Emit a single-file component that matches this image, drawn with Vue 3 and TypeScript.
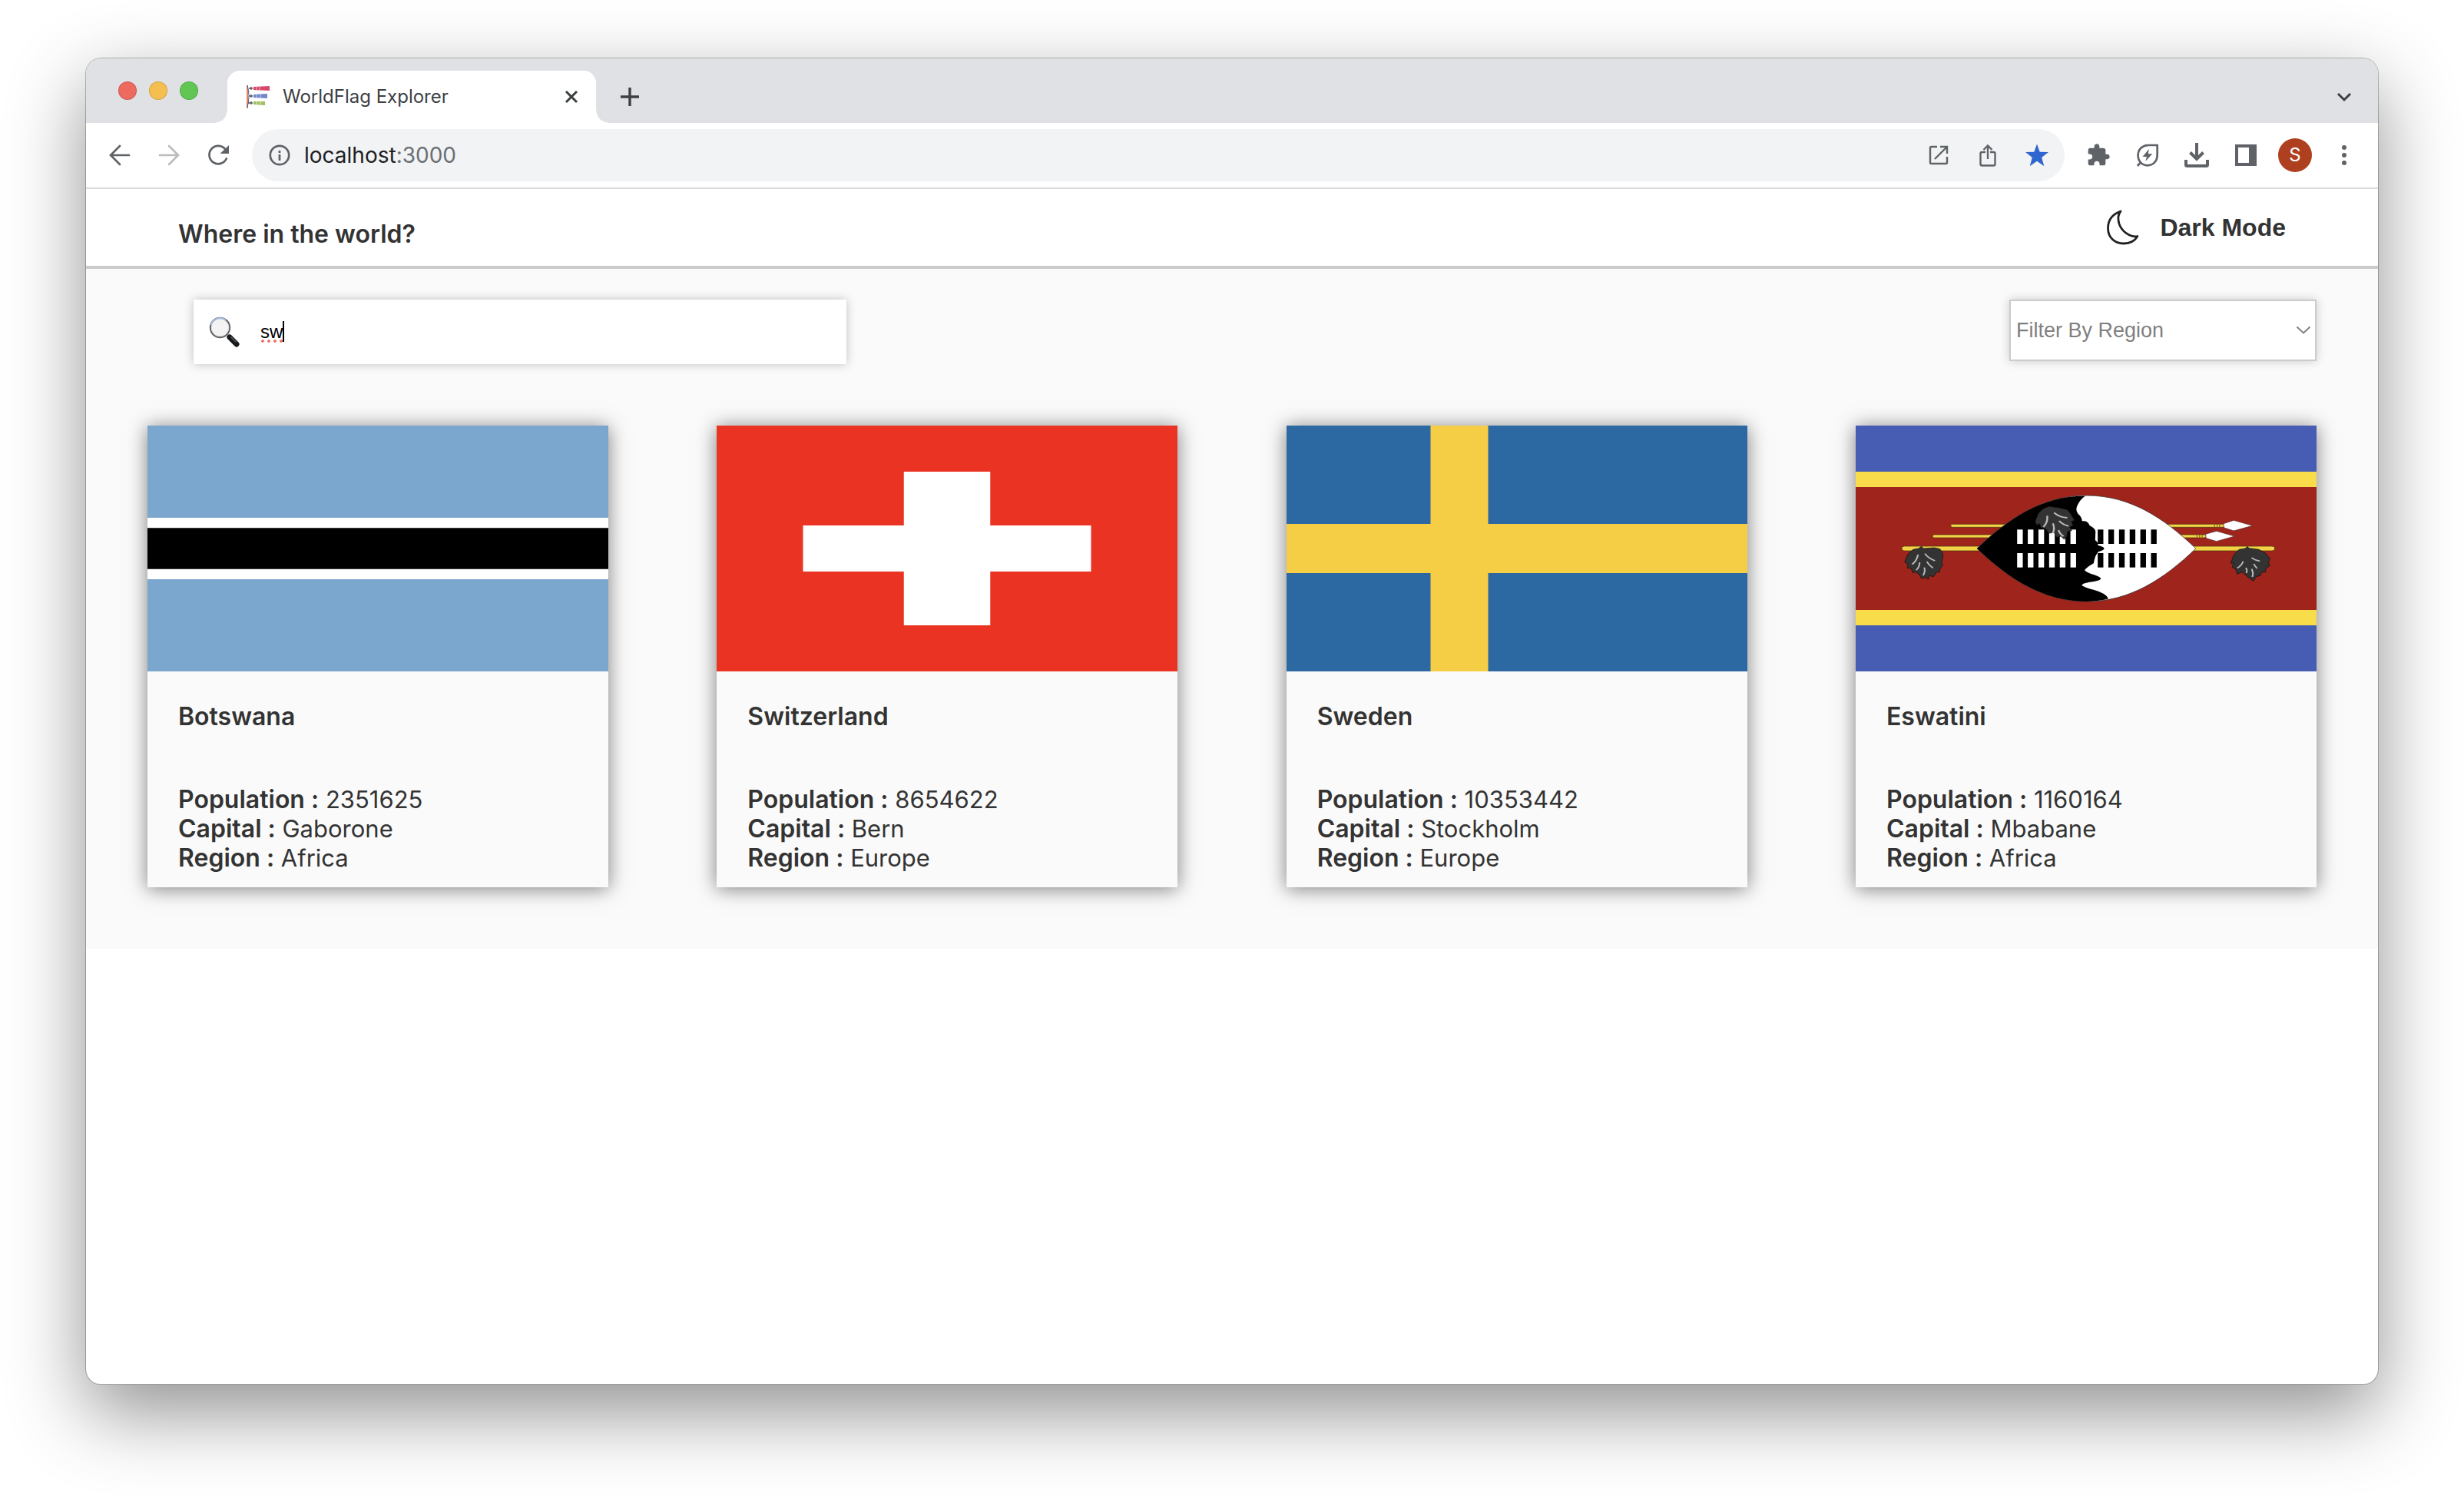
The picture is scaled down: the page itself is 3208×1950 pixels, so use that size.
<script setup lang="ts">
import { ref } from 'vue'

interface Country {
  name: string
  population: number
  capital: string
  region: string
}

const countries: Country[] = [
  { name: 'Botswana', population: 2351625, capital: 'Gaborone', region: 'Africa' },
  { name: 'Switzerland', population: 8654622, capital: 'Bern', region: 'Europe' },
  { name: 'Sweden', population: 10353442, capital: 'Stockholm', region: 'Europe' },
  { name: 'Eswatini', population: 1160164, capital: 'Mbabane', region: 'Africa' },
]

const regions = ['Africa', 'Americas', 'Asia', 'Europe', 'Oceania']
const query = ref('sw')
const region = ref('')

const slots = [0, 1, 2, 3, 4, 5]
</script>

<template>
  <div class="desktop">
    <div class="window">
      <div class="tabstrip">
        <div class="lights">
          <button class="light red" aria-label="Close window"></button>
          <button class="light amber" aria-label="Minimise window"></button>
          <button class="light green" aria-label="Zoom window"></button>
        </div>
        <div class="tab">
          <svg class="i32" viewBox="0 0 32 32">
            <path d="M2 1V31" stroke="#e8836b" stroke-width="2" />
            <path d="M2 1Q6 14 2 30" fill="none" stroke="#555a6b" stroke-width="1" />
            <path d="M4 5H9M4 15H9M3 24H9M7 3V7M7 13V17M7 22V26" stroke="#4b5164" stroke-width="1.3" />
            <path d="M10 3L31 2V8L10 7Z" fill="#d6476a" />
            <path d="M10 13L28 12V18L10 17Z" fill="#7187c9" />
            <path d="M10 22L25 22V27L10 26Z" fill="#9fbf62" />
            <path d="M14 3V7M18 3V7" stroke="#f08aa4" stroke-width="1.5" />
            <path d="M14 13V17M19 13V17" stroke="#a9b8e6" stroke-width="1.5" />
            <path d="M14 22V26M19 22V26" stroke="#cfe09c" stroke-width="1.5" />
          </svg>
          <span class="tab-title">WorldFlag Explorer</span>
          <button class="ib small" aria-label="Close tab">
            <svg class="i32" viewBox="0 0 32 32"><path d="M9 9L23 23M23 9L9 23" stroke="#3c4043" stroke-width="3" /></svg>
          </button>
        </div>
        <button class="ib new-tab" aria-label="New tab">
          <svg class="i32" viewBox="0 0 32 32"><path d="M16 4V28M4 16H28" stroke="#3c4043" stroke-width="3.4" /></svg>
        </button>
        <button class="ib tab-search" aria-label="Search tabs">
          <svg class="i32" viewBox="0 0 32 32"><path d="M8 12L16 20L24 12" fill="none" stroke="#3c4043" stroke-width="3" /></svg>
        </button>
      </div>

      <div class="toolbar">
        <button class="ib" aria-label="Back">
          <svg class="i32" viewBox="0 0 32 32"><path d="M28 16H4.5M16 4L4 16L16 28" fill="none" stroke="#5f6368" stroke-width="2.7" stroke-linecap="round" /></svg>
        </button>
        <button class="ib" aria-label="Forward">
          <svg class="i32" viewBox="0 0 32 32"><path d="M4 16H28M16 4L28 16L16 28" fill="none" stroke="#babcbe" stroke-width="2.7" stroke-linecap="round" /></svg>
        </button>
        <button class="ib" aria-label="Reload">
          <svg class="i32" viewBox="0 0 32 32">
            <path d="M25.5 8.5A11.7 11.7 0 1 0 26.8 20.5" fill="none" stroke="#5f6368" stroke-width="2.7" stroke-linecap="round" />
            <path d="M30 3V14H18.5Z" fill="#5f6368" />
          </svg>
        </button>
        <div class="omnibox">
          <svg class="i32" viewBox="0 0 32 32">
            <circle cx="16" cy="16" r="12.2" fill="none" stroke="#5f6368" stroke-width="2.7" />
            <path d="M16 10V13M16 15V23" stroke="#5f6368" stroke-width="2.8" />
          </svg>
          <span class="url">localhost<span class="port">:3000</span></span>
          <button class="ib" aria-label="Open in app">
            <svg class="i32" viewBox="0 0 32 32">
              <path d="M14 5H6.5A1.5 1.5 0 0 0 5 6.5V25.5A1.5 1.5 0 0 0 6.5 27H25.5A1.5 1.5 0 0 0 27 25.5V18M18 5H27V14M27 5L11 21" fill="none" stroke="#5f6368" stroke-width="2.4" />
            </svg>
          </button>
          <button class="ib" aria-label="Share">
            <svg class="i32" viewBox="0 0 32 32">
              <path d="M13 12H8.5A2 2 0 0 0 6.5 14V27.5A2 2 0 0 0 8.5 29.5H23.5A2 2 0 0 0 25.5 27.5V14A2 2 0 0 0 23.5 12H19M16 21V4M10.5 9L16 3.5L21.5 9" fill="none" stroke="#5f6368" stroke-width="2.4" />
            </svg>
          </button>
          <button class="ib" aria-label="Bookmarked">
            <svg class="i32" viewBox="0 0 32 32"><path d="M16 1.5L19.7 11.7L31 12L22.2 19L25.3 30.2L16 23.8L6.7 30.2L9.8 19L1 12L12.3 11.7Z" fill="#3166cf" /></svg>
          </button>
        </div>
        <button class="ib" aria-label="Extensions">
          <svg class="i32" viewBox="0 0 24 24">
            <path d="M20.5 11H19V7c0-1.1-.9-2-2-2h-4V3.5C13 2.12 11.88 1 10.5 1S8 2.12 8 3.5V5H4c-1.1 0-1.99.9-1.99 2v3.8H3.5c1.49 0 2.7 1.21 2.7 2.7s-1.21 2.7-2.7 2.7H2V20c0 1.1.9 2 2 2h3.8v-1.5c0-1.49 1.21-2.7 2.7-2.7s2.7 1.21 2.7 2.7V22H17c1.1 0 2-.9 2-2v-4h1.5c1.38 0 2.5-1.12 2.5-2.5S21.88 11 20.5 11z" fill="#5f6368" />
          </svg>
        </button>
        <button class="ib" aria-label="Energy saver">
          <svg class="i32" viewBox="0 0 32 32">
            <path d="M28.7 3H17C9 3 3.6 8.5 3.6 16.2C3.6 24 9 29.3 15.8 29.3C23 29.3 28.7 24 28.7 15.5ZM7 25.5L2.8 30" fill="none" stroke="#5f6368" stroke-width="2.7" />
            <path d="M17.8 8L9.5 18H15L13.2 24L22.3 14.3H16.8Z" fill="#5f6368" />
          </svg>
        </button>
        <button class="ib" aria-label="Downloads">
          <svg class="i32" viewBox="0 0 32 32">
            <path d="M16 0V21M7.5 12.5L16 21L24.5 12.5M2 22V28.5A1.5 1.5 0 0 0 3.5 30H28.5A1.5 1.5 0 0 0 30 28.5V22" fill="none" stroke="#5f6368" stroke-width="4" />
          </svg>
        </button>
        <button class="ib" aria-label="Side panel">
          <svg class="i32" viewBox="0 0 32 32"><path d="M2 2H30V30H2ZM6 6V26H20V6Z" fill="#5f6368" fill-rule="evenodd" /></svg>
        </button>
        <button class="ib avatar" aria-label="Profile"><span class="disc">S</span></button>
        <button class="ib" aria-label="Menu">
          <svg class="i32" viewBox="0 0 32 32" fill="#5f6368"><circle cx="16" cy="6" r="3" /><circle cx="16" cy="16" r="3" /><circle cx="16" cy="26" r="3" /></svg>
        </button>
      </div>

      <header class="header">
        <h1 class="brand">Where in the world?</h1>
        <button class="mode">
          <svg class="moon" viewBox="0 0 42 46">
            <path d="M19 2C8 6 2.5 14 2.5 24C2.5 36 11 44 23 44C31 44 37.5 40.5 41 34.5Q37 35.5 33 34C22 30.5 15 20 16 9Q16.5 5 19 2Z" fill="none" stroke="#222" stroke-width="2.8" stroke-linejoin="round" />
          </svg>
          <span>Dark Mode</span>
        </button>
      </header>

      <main class="main">
        <div class="filters">
          <div class="search">
            <svg class="glass" viewBox="0 0 40 40" aria-hidden="true">
              <path d="M24.5 24.5L27 27" stroke="#8c9094" stroke-width="4" />
              <path d="M27 27L36 36" stroke="#16191c" stroke-width="7" stroke-linecap="round" />
              <path d="M28.5 26.5L35.5 33.5" stroke="#525a60" stroke-width="1.5" />
              <circle cx="14.5" cy="14.5" r="12.6" fill="#f3f3f3" stroke="#62676b" stroke-width="2.2" />
              <path d="M2.5 11A12.6 12.6 0 0 1 22 4.5" fill="none" stroke="#9dbbe0" stroke-width="1.8" />
              <circle cx="14.5" cy="14.5" r="11.3" fill="none" stroke="#d5d8da" stroke-width="0.8" />
            </svg>
            <input v-model="query" class="query" type="text" aria-label="Search for a country" spellcheck="false" />
            <span class="caret"></span>
            <span class="squiggle"></span>
          </div>
          <div class="picker">
            <select v-model="region" class="region" aria-label="Filter by region">
              <option value="">Filter By Region</option>
              <option v-for="r in regions" :key="r" :value="r">{{ r }}</option>
            </select>
            <svg class="arrow" viewBox="0 0 20 12"><path d="M1.5 1.5L10 9.5L18.5 1.5" fill="none" stroke="#808080" stroke-width="2" /></svg>
          </div>
        </div>

        <div class="cards">
          <article v-for="c in countries" :key="c.name" class="card">
            <svg v-if="c.name === 'Botswana'" class="flag" viewBox="0 0 24 24" preserveAspectRatio="none">
              <path d="M0 0H24V24H0Z" fill="#7ba6ce" />
              <path d="M0 9H24V15H0Z" fill="#fff" />
              <path d="M0 10H24V14H0Z" fill="#000" />
            </svg>
            <svg v-else-if="c.name === 'Switzerland'" class="flag" viewBox="0 0 32 32" preserveAspectRatio="none">
              <path d="M0 0H32V32H0Z" fill="#ea3323" />
              <path d="M13 6H19V13H26V19H19V26H13V19H6V13H13Z" fill="#fff" />
            </svg>
            <svg v-else-if="c.name === 'Sweden'" class="flag" viewBox="0 0 16 10" preserveAspectRatio="none">
              <path d="M0 0H16V10H0Z" fill="#2c68a2" />
              <path d="M5 0H7V4H16V6H7V10H5V6H0V4H5Z" fill="#f6ce46" />
            </svg>
            <svg v-else class="flag" viewBox="39 42 1470 960" preserveAspectRatio="none">
              <path d="M39 42H1509V1002H39Z" fill="#465db3" />
              <path d="M39 222H1509V822H39Z" fill="#f8dc4a" />
              <path d="M39 282H1509V762H39Z" fill="#9f241b" />
              <g fill="#f3d346" stroke="#4a3510" stroke-width="2">
                <rect x="342" y="427" width="874" height="12" rx="6" />
                <rect x="284" y="468" width="874" height="12" rx="6" />
                <rect x="186" y="513" width="1190" height="18" rx="9" />
              </g>
              <path d="M1184 428V439M1192 428V439M1200 428V439M1128 468V479M1136 468V479M1144 468V479" stroke="#8a6d1c" stroke-width="3" />
              <path d="M1212 425L1245 412L1305 433L1245 453L1214 441ZM1155 466L1190 454L1248 474L1190 494L1157 482Z" fill="#fff" stroke="#5a2a25" stroke-width="2" />
              <path d="M426 522C530 400 640 315 776 315S1020 400 1124 522C1020 644 912 729 776 729S530 644 426 522Z" fill="#fff" stroke="#333" stroke-width="2" />
              <path d="M426 522C530 400 640 315 771 317Q755 330 747 352Q738 372 749 388Q760 398 761 415Q780 412 785 432Q804 444 804 456L803 490Q812 496 812 510Q830 514 832 522Q830 530 814 534Q803 545 798 580Q775 596 769 607Q778 618 800 625Q822 634 821 641Q816 648 785 653Q762 658 760 665Q768 674 800 684Q838 697 845 718Q820 728 776 729C640 729 530 644 426 522Z" fill="#000" />
              <g v-for="i in slots" :key="i">
                <rect :x="554 + i * 34" y="448" width="18" height="56" fill="#fff" />
                <rect :x="554 + i * 34" y="540" width="18" height="56" fill="#fff" />
                <rect :x="811 + i * 34" y="448" width="18" height="56" fill="#000" />
                <rect :x="811 + i * 34" y="540" width="18" height="56" fill="#000" />
              </g>
              <path d="M195 575L205 545L222 526L240 522L248 514L256 522L290 519L308 524L318 545L314 575L316 590L309 598L306 615L296 614L288 632L274 628L270 643L262 634L250 640L240 622L228 612L222 618L216 600L204 598L206 584Z" fill="#333" stroke="#111" stroke-width="2" />
              <path d="M238 546Q234 570 219 584M243 576Q243 594 232 607M258 596Q262 612 254 627M260 542Q270 560 292 570M266 573Q274 590 286 598" fill="none" stroke="#b9b9b9" stroke-width="5" />
              <path d="M612 415L622 385L638 366L656 358L690 364L715 371L727 392L737 412L727 416L732 432L722 438L728 452L715 455L712 474L704 486L694 474L680 478L672 460L655 462L646 446L630 440L626 425L616 430Z" fill="#333" stroke="#1d1110" stroke-width="2" />
              <path d="M650 394Q653 418 638 438M668 424Q675 442 668 462M672 382Q688 400 714 402M688 414Q700 430 718 434M686 450Q690 466 702 474" fill="none" stroke="#b9b9b9" stroke-width="6" />
              <path d="M1235 580L1246 545L1262 526L1282 522L1288 514L1294 521L1325 526L1348 542L1360 562L1356 578L1360 590L1348 598L1346 614L1334 614L1330 628L1316 632L1308 649L1290 634L1272 614L1256 622L1250 600L1240 596L1244 578Z" fill="#333" stroke="#111" stroke-width="2" />
              <path d="M1275 572Q1270 588 1256 599M1284 597Q1289 608 1285 618M1302 602Q1309 618 1304 633M1302 558Q1312 568 1328 571M1309 582Q1314 594 1320 600" fill="none" stroke="#b9b9b9" stroke-width="5" />
            </svg>
            <div class="info">
              <h2 class="name">{{ c.name }}</h2>
              <p class="fact"><b>Population :</b> {{ c.population }}</p>
              <p class="fact"><b>Capital :</b> {{ c.capital }}</p>
              <p class="fact"><b>Region :</b> {{ c.region }}</p>
            </div>
          </article>
        </div>
      </main>
    </div>
  </div>
</template>

<style>
body {
  background: #fff;
}
</style>

<style scoped>
.desktop {
  box-sizing: border-box;
  min-height: 100vh;
  padding: 76px 112px 148px;
  display: flex;
  font-family: Inter, "Liberation Sans", sans-serif;
  color: #333;
  overflow: hidden;
}
.window {
  flex: 1;
  min-width: 0;
  background: #fff;
  border-radius: 20px;
  overflow: hidden;
  box-shadow: 0 0 0 1px rgba(0, 0, 0, 0.26), 0 36px 100px rgba(0, 0, 0, 0.44);
}
button {
  border: 0;
  padding: 0;
  background: none;
  font: inherit;
  color: inherit;
}
svg {
  display: block;
}
.i32 {
  width: 32px;
  height: 32px;
  flex: none;
}
.ib {
  flex: none;
  width: 40px;
  height: 40px;
  display: flex;
  align-items: center;
  justify-content: center;
}
.tabstrip {
  height: 84px;
  background: #dfe1e5;
  display: flex;
  align-items: flex-end;
}
.lights {
  height: 84px;
  margin: 0 38px 0 42px;
  display: flex;
  align-items: center;
  gap: 16px;
}
.light {
  width: 24px;
  height: 24px;
  border-radius: 50%;
  box-shadow: inset 0 0 0 1px rgba(0, 0, 0, 0.14);
}
.red {
  background: #ed6a5f;
}
.amber {
  background: #f5bf4f;
}
.green {
  background: #62c655;
}
.tab {
  position: relative;
  box-sizing: border-box;
  width: 480px;
  height: 68px;
  padding: 0 16px 0 24px;
  background: #fff;
  border-radius: 16px 16px 0 0;
  display: flex;
  align-items: center;
  gap: 16px;
}
.tab::before,
.tab::after {
  content: "";
  position: absolute;
  bottom: 0;
  width: 16px;
  height: 16px;
}
.tab::before {
  right: 100%;
  background: radial-gradient(circle at 0 0, transparent 15px, #fff 16px);
}
.tab::after {
  left: 100%;
  background: radial-gradient(circle at 100% 0, transparent 15px, #fff 16px);
}
.tab-title {
  flex: 1;
  font-size: 24px;
  line-height: 32px;
  color: #3c4043;
}
.ib.small {
  width: 32px;
}
.new-tab {
  margin: 0 0 14px 24px;
}
.tab-search {
  margin: 0 24px 14px auto;
}
.toolbar {
  height: 84px;
  padding: 0 24px;
  border-bottom: 2px solid #dadce0;
  display: flex;
  align-items: center;
  gap: 24px;
}
.omnibox {
  flex: 1;
  height: 68px;
  padding: 0 16px 0 20px;
  border-radius: 34px;
  background: #f1f3f4;
  display: flex;
  align-items: center;
  gap: 24px;
  box-sizing: border-box;
}
.url {
  flex: 1;
  margin-left: -8px;
  font-size: 28px;
  line-height: 36px;
  color: #202124;
}
.port {
  color: #6b6e72;
}
.disc {
  flex: none;
  width: 44px;
  height: 44px;
  border-radius: 50%;
  background: #ae4020;
  color: #fff;
  font-size: 24px;
  line-height: 44px;
  text-align: center;
}
.header {
  height: 100px;
  padding: 0 120px;
  border-bottom: 4px solid #ccc;
  display: flex;
  align-items: center;
  justify-content: space-between;
}
.brand {
  margin: 18px 0 0;
  font-size: 32px;
  line-height: 38px;
  font-weight: 600;
}
.mode {
  display: flex;
  align-items: center;
  gap: 28px;
  font: 700 32px/38px "Liberation Sans", Arial, sans-serif;
}
.moon {
  width: 42px;
  height: 46px;
}
.main {
  padding: 40px 80px 80px;
  background: #fafafa;
}
.filters {
  display: flex;
  justify-content: space-between;
  align-items: flex-start;
  margin-bottom: 80px;
}
.search {
  position: relative;
  box-sizing: border-box;
  width: 850px;
  height: 84px;
  margin-left: 60px;
  padding-left: 20px;
  background: #fff;
  box-shadow: 0 0 12px rgba(0, 0, 0, 0.24);
  display: flex;
  align-items: center;
  gap: 27px;
}
.glass {
  width: 40px;
  height: 40px;
}
.query {
  flex: 1;
  min-width: 0;
  height: 80px;
  padding: 0;
  border: 0;
  outline: 0;
  background: none;
  color: #000;
  font: 24px/32px "Liberation Sans", Arial, sans-serif;
}
.caret {
  position: absolute;
  left: 116px;
  top: 28px;
  width: 2px;
  height: 27px;
  background: #000;
}
.squiggle {
  position: absolute;
  left: 88px;
  top: 52px;
  width: 29px;
  height: 4px;
  background: radial-gradient(circle at 2px 2px, #f0776d 2px, transparent 2px) 0 0 / 8px 4px;
}
.picker {
  position: relative;
}
.region {
  appearance: none;
  box-sizing: border-box;
  display: block;
  width: 400px;
  height: 80px;
  padding: 0 40px 0 7px;
  border: 2px solid #ccc;
  border-radius: 0;
  background: #fff;
  color: #808080;
  font: 27px/36px "Liberation Sans", Arial, sans-serif;
  box-shadow: 0 0 12px rgba(0, 0, 0, 0.2);
}
.arrow {
  position: absolute;
  right: 7px;
  top: 34px;
  width: 20px;
  height: 12px;
  pointer-events: none;
}
.cards {
  display: flex;
  justify-content: space-between;
}
.card {
  flex: 0 1 600px;
  background: #fafafa;
  box-shadow: 0 2px 24px rgba(0, 0, 0, 0.5);
}
.flag {
  width: 100%;
  height: 320px;
}
.info {
  padding: 40px 40px 19px;
}
.name {
  margin: 0 0 70px;
  font-size: 32px;
  line-height: 38px;
  font-weight: 600;
}
.fact {
  margin: 0;
  font-size: 31px;
  line-height: 38px;
}
.fact b {
  font-size: 32px;
  line-height: 32px;
  font-weight: 600;
}
</style>
